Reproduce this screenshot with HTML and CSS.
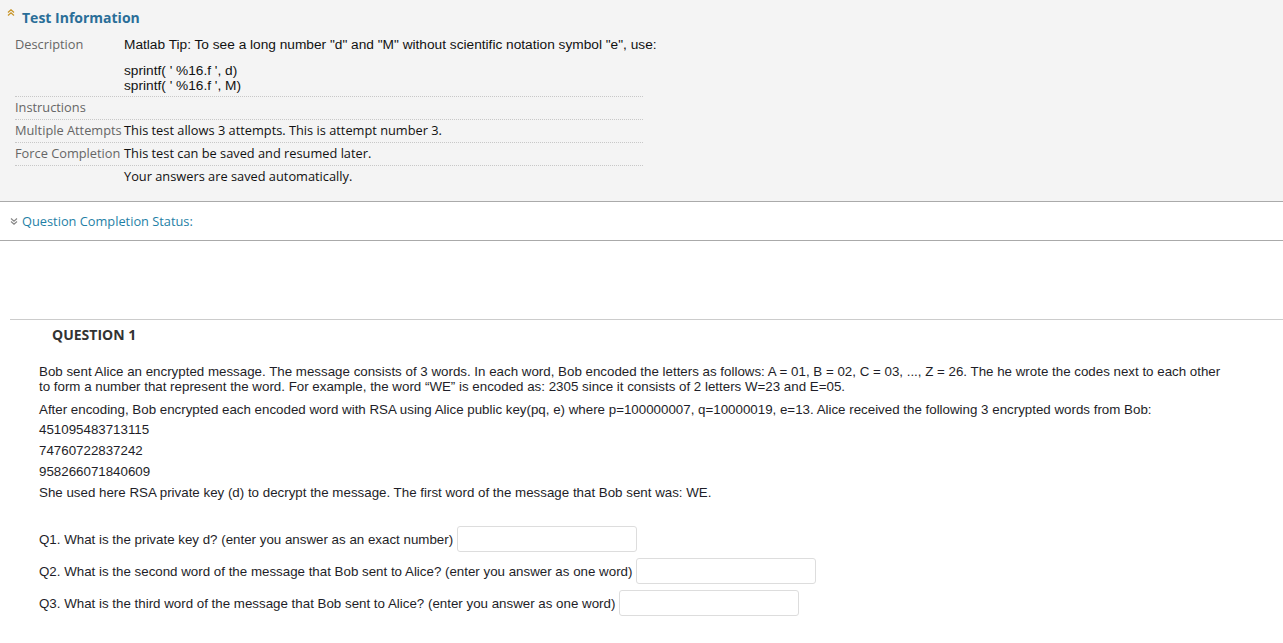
FILE: index.html
```html
<!DOCTYPE html>
<html>
<head>
<meta charset="utf-8">
<link rel="stylesheet" href="styles.css">
</head>
<body>
<div class="info">
  <h2 class="info-title"><svg class="chev-up" width="8" height="7" viewBox="0 0 8 7"><path d="M1 3.5 L4 0.8 L7 3.5 M1 6.5 L4 3.8 L7 6.5" fill="none" stroke="#c8962a" stroke-width="1.3"/></svg>Test Information</h2>
  <div class="info-table">
    <div class="row">
      <div class="label">Description</div>
      <div class="value arial">
        <p class="tip">Matlab Tip: To see a long number "d" and "M" without scientific notation symbol "e", use:</p>
        <p class="code">sprintf( ' %16.f ', d)<br>sprintf( ' %16.f ', M)</p>
      </div>
    </div>
    <div class="row">
      <div class="label">Instructions</div>
      <div class="value"></div>
    </div>
    <div class="row">
      <div class="label">Multiple Attempts</div>
      <div class="value">This test allows 3 attempts. This is attempt number 3.</div>
    </div>
    <div class="row">
      <div class="label">Force Completion</div>
      <div class="value">This test can be saved and resumed later.</div>
    </div>
    <div class="row last">
      <div class="label"></div>
      <div class="value">Your answers are saved automatically.</div>
    </div>
  </div>
</div>
<div class="status">
  <svg class="chev-down" width="8" height="7" viewBox="0 0 8 7"><path d="M1 0.5 L4 3.2 L7 0.5 M1 3.5 L4 6.2 L7 3.5" fill="none" stroke="#888" stroke-width="1.2"/></svg>
  <span>Question Completion Status:</span>
</div>
<div class="question">
  <h3 class="q-title">QUESTION 1</h3>
  <div class="q-body">
    <p class="p1">Bob sent Alice an encrypted message. The message consists of 3 words. In each word, Bob encoded the letters as follows: A = 01, B = 02, C = 03, ..., Z = 26. The he wrote the codes next to each other to form a number that represent the word. For example, the word “WE” is encoded as: 2305 since it consists of 2 letters W=23 and E=05.</p>
    <p class="p2">After encoding, Bob encrypted each encoded word with RSA using Alice public key(pq, e) where p=100000007, q=10000019, e=13. Alice received the following 3 encrypted words from Bob:</p>
    <p>451095483713115</p>
    <p>74760722837242</p>
    <p>958266071840609</p>
    <p>She used here RSA private key (d) to decrypt the message. The first word of the message that Bob sent was: WE.</p>
    <div class="answers">
      <div class="ans">Q1. What is the private key d? (enter you answer as an exact number) <input type="text" class="box"></div>
      <div class="ans">Q2. What is the second word of the message that Bob sent to Alice? (enter you answer as one word) <input type="text" class="box"></div>
      <div class="ans">Q3. What is the third word of the message that Bob sent to Alice? (enter you answer as one word) <input type="text" class="box"></div>
    </div>
  </div>
</div>
</body>
</html>
```
FILE: styles.css
```css
html, body {
  margin: 0;
  padding: 0;
  background: #fff;
}
body {
  font-family: "Open Sans", "Liberation Sans", sans-serif;
  color: #222;
}
p { margin: 0; }
.info {
  background: #f4f4f4;
  border-bottom: 1px solid #aaa;
  padding: 9px 0 13px 0;
}
.info-title {
  margin: 0 0 0 7px;
  font-size: 14px;
  font-weight: 700;
  color: #2a6e98;
  line-height: 18px;
  display: flex;
  align-items: flex-start;
}
.chev-up {
  margin-top: 0;
  margin-right: 7px;
}
.info-table {
  margin: 0 0 0 15px;
  width: 628px;
  padding-top: 7px;
}
.row {
  display: flex;
  border-bottom: 1px dotted #c8c8c8;
  padding: 2px 0 3px 0;
  font-size: 12.8px;
  line-height: 17px;
}
.row.last { border-bottom: none; }
.label {
  width: 109px;
  flex: none;
  color: #666;
}
.value {
  color: #111;
}
.arial {
  font-family: "Liberation Sans", Arial, sans-serif;
  font-size: 13.7px;
  line-height: 15px;
}
.tip { margin-top: 1px; white-space: nowrap; }
.code { margin-top: 11px; margin-bottom: 0; }
.status {
  display: flex;
  align-items: center;
  height: 38px;
  border-bottom: 1px solid #aaa;
  padding-left: 10px;
  font-size: 12.8px;
  color: #1f7fa6;
}
.chev-down { margin-right: 4px; margin-top: 1px; }
.question {
  margin: 78px 0 0 10px;
  border-top: 1px solid #ccc;
}
.q-title {
  margin: 6px 0 0 42px;
  font-size: 14px;
  font-weight: 700;
  color: #333;
  line-height: 18px;
}
.q-body {
  margin: 20px 0 0 29px;
  font-family: "Liberation Sans", Arial, sans-serif;
  font-size: 13.34px;
  line-height: 15px;
  color: #1e1e28;
  width: 1192px;
}
.q-body p { margin-bottom: 6px; }
.q-body p.p1 { margin-bottom: 8px; }
.q-body p.p2 { margin-bottom: 5px; }
.answers { margin-top: 26px; }
.ans {
  display: flex;
  align-items: center;
  gap: 4px;
  height: 26px;
  margin-bottom: 6px;
}
.box {
  width: 180px;
  height: 26px;
  box-sizing: border-box;
  border: 1px solid #ddd;
  border-radius: 3px;
  background: #fff;
  margin: 0;
}
```
